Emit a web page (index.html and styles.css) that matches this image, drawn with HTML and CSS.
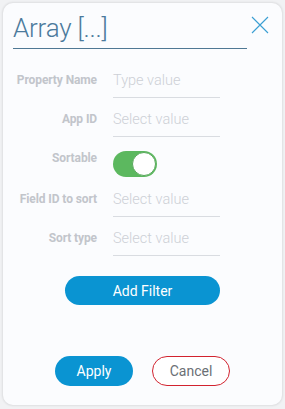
FILE: index.html
```html
<!DOCTYPE html>
<html>
<head>
<meta charset="utf-8">
<link rel="stylesheet" href="styles.css">
</head>
<body>
<div class="modal">
  <div class="header">
    <div class="title">Array [...]</div>
    <svg class="close" width="18" height="18" viewBox="0 0 18 18"><path d="M1 1L17 17M17 1L1 17" stroke="#3b9fd3" stroke-width="1.1" fill="none"/></svg>
  </div>
  <div class="form">
    <div class="row">
      <div class="label">Property Name</div>
      <div class="input">Type value</div>
    </div>
    <div class="row">
      <div class="label">App ID</div>
      <div class="input">Select value</div>
    </div>
    <div class="row row-toggle">
      <div class="label">Sortable</div>
      <div class="toggle"><div class="knob"></div></div>
    </div>
    <div class="row">
      <div class="label">Field ID to sort</div>
      <div class="input">Select value</div>
    </div>
    <div class="row">
      <div class="label">Sort type</div>
      <div class="input">Select value</div>
    </div>
  </div>
  <div class="add-wrap"><button class="btn btn-add">Add Filter</button></div>
  <div class="footer">
    <button class="btn btn-apply">Apply</button>
    <button class="btn btn-cancel">Cancel</button>
  </div>
</div>
</body>
</html>
```
FILE: styles.css
```css
html, body {
  margin: 0;
  padding: 0;
  background: #f1f2f4;
  font-family: Roboto, "Liberation Sans", sans-serif;
}
body {
  padding: 3px;
  width: 285px;
  height: 409px;
  box-sizing: border-box;
}
.modal {
  width: 279px;
  height: 402px;
  background: #fbfcfe;
  border-radius: 10px;
  box-shadow: 0 0 2px 1px rgba(0, 0, 0, 0.08);
  display: flex;
  flex-direction: column;
}
.header {
  display: flex;
  align-items: flex-start;
  margin-top: 7px;
  padding-left: 10px;
  gap: 4px;
}
.title {
  width: 234px;
  font-size: 26px;
  line-height: 36px;
  color: #4c7a9c;
  padding-bottom: 2px;
  border-bottom: 1px solid #4f7894;
  font-weight: 300;
  letter-spacing: -0.2px;
}
.close {
  margin-top: 6px;
}
.form {
  margin-top: 21px;
  display: flex;
  flex-direction: column;
}
.row {
  display: flex;
  align-items: flex-start;
  height: 39px;
  gap: 16px;
}
.row-toggle {
  height: 41px;
}
.label {
  width: 94px;
  text-align: right;
  font-size: 12px;
  font-weight: 700;
  letter-spacing: -0.1px;
  line-height: 20px;
  color: #c2c5cb;
}
.input {
  width: 107px;
  font-size: 14.5px;
  font-weight: 300;
  line-height: 20px;
  margin-top: 1px;
  padding-bottom: 6px;
  color: #cdd0d6;
  border-bottom: 1px solid #d9dce1;
}
.toggle {
  width: 44px;
  height: 26px;
  margin-top: 3px;
  border-radius: 13px;
  background: #5cb85f;
  display: flex;
  justify-content: flex-end;
  align-items: center;
  box-sizing: border-box;
  padding-right: 1px;
}
.knob {
  width: 24px;
  height: 24px;
  border-radius: 50%;
  background: #ffffff;
  box-sizing: border-box;
  border: 1px solid #58a85b;
}
.add-wrap {
  display: flex;
  justify-content: center;
  margin-top: 9px;
}
.btn {
  font-family: Roboto, "Liberation Sans", sans-serif;
  font-size: 14px;
  border-radius: 15px;
  padding: 0;
  cursor: pointer;
}
.btn-add {
  width: 155px;
  height: 29px;
  background: #0a94d2;
  color: #ffffff;
  border: none;
}
.footer {
  display: flex;
  justify-content: center;
  gap: 19px;
  margin-top: 51px;
}
.btn-apply {
  width: 78px;
  height: 30px;
  background: #0a94d2;
  color: #ffffff;
  border: none;
}
.btn-cancel {
  width: 78px;
  height: 30px;
  background: #ffffff;
  color: #6b6f75;
  border: 1px solid #d2232f;
}
```
